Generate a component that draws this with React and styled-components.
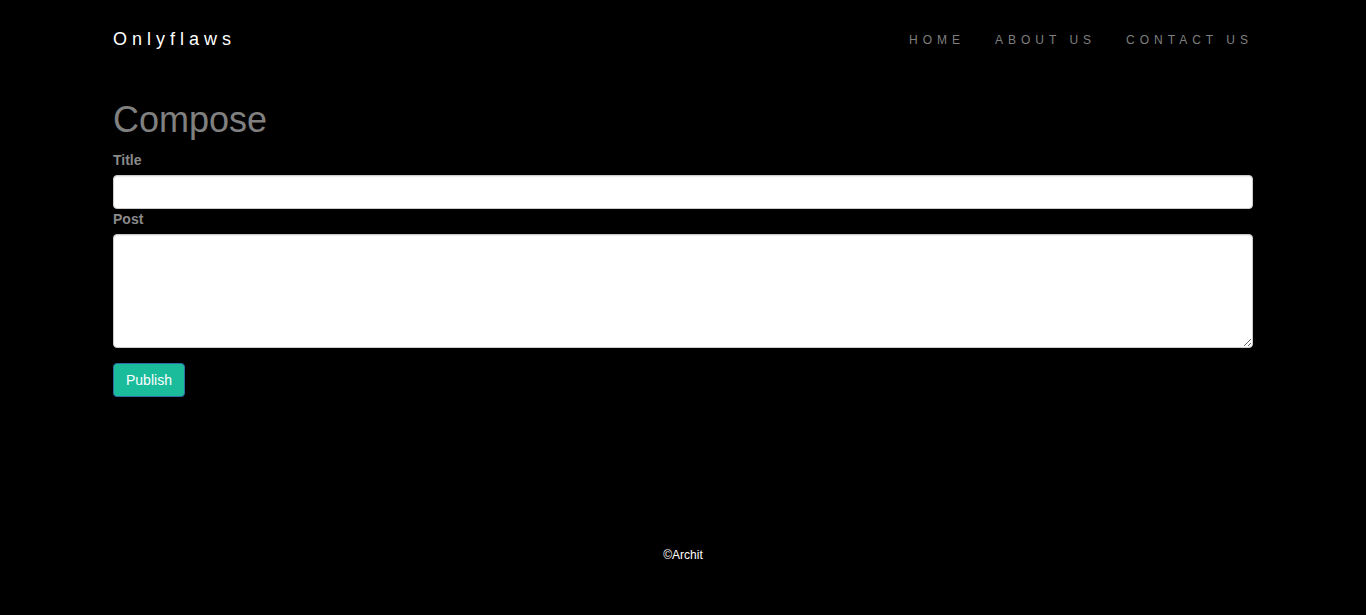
import React from 'react';
import styled, { createGlobalStyle } from 'styled-components';

const GlobalStyle = createGlobalStyle`
  * { box-sizing: border-box; }
  body {
    margin: 0;
    background: #000;
    font-family: "Liberation Sans", Arial, sans-serif;
    font-size: 14px;
    line-height: 1.42857;
    color: #333;
  }
`;

const Container = styled.div`
  width: 1170px;
  margin: 0 auto;
  padding: 0 15px;
`;

const Navbar = styled.nav`
  height: 80px;
  display: flex;
  align-items: center;
  justify-content: space-between;
`;

const Brand = styled.a`
  color: #fff;
  font-size: 18px;
  letter-spacing: 5px;
  text-decoration: none;
`;

const NavList = styled.ul`
  display: flex;
  gap: 30px;
  list-style: none;
  margin: 0;
  padding: 0;
`;

const NavLink = styled.a`
  color: #7f7f7f;
  font-size: 12px;
  letter-spacing: 5px;
  text-decoration: none;
`;

const Heading = styled.h1`
  margin: 20px 0 10px;
  font-size: 36px;
  font-weight: 500;
  line-height: 1.1;
  color: #808080;
`;

const Label = styled.label`
  display: block;
  padding-top: 1px;
  margin-bottom: 4px;
  font-weight: bold;
  color: #8a8a8a;
`;

const fieldStyles = `
  display: block;
  width: 100%;
  padding: 6px 12px;
  font-size: 14px;
  font-family: inherit;
  color: #555;
  background: #fff;
  border: 1px solid #ccc;
  border-radius: 4px;
  box-shadow: inset 0 1px 1px rgba(0,0,0,.075);
`;

const Input = styled.input`
  ${fieldStyles}
  height: 34px;
`;

const TextArea = styled.textarea`
  ${fieldStyles}
  height: 114px;
  resize: vertical;
`;

const Button = styled.button`
  margin-top: 15px;
  padding: 7px 12px 5px;
  height: 34px;
  font-family: inherit;
  font-size: 14px;
  line-height: 1.42857;
  color: #fff;
  background: #1abc9c;
  border: 1px solid #2e6da4;
  border-radius: 4px;
  cursor: pointer;
`;

const Footer = styled.footer`
  margin-top: 150px;
  text-align: center;
  color: #fff;
  font-size: 12px;
`;

export default function App() {
  return (
    <>
      <GlobalStyle />
      <Container>
        <Navbar>
          <Brand href="#">Onlyflaws</Brand>
          <NavList>
            <li><NavLink href="#">HOME</NavLink></li>
            <li><NavLink href="#">ABOUT US</NavLink></li>
            <li><NavLink href="#">CONTACT US</NavLink></li>
          </NavList>
        </Navbar>
        <Heading>Compose</Heading>
        <form onSubmit={e => e.preventDefault()}>
          <Label>Title</Label>
          <Input type="text" />
          <Label>Post</Label>
          <TextArea />
          <Button type="submit">Publish</Button>
        </form>
      </Container>
      <Footer>©Archit</Footer>
    </>
  );
}
